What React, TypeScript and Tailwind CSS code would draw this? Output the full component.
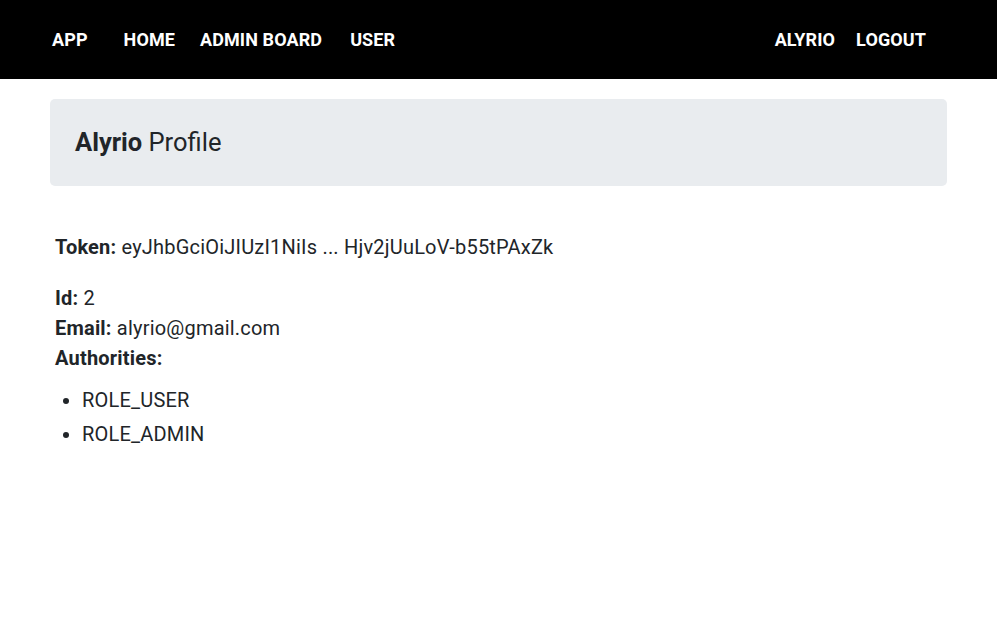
export default function App() {
  return (
    <div className="min-h-screen bg-white text-[#212529]" style={{ fontFamily: 'Roboto, "Liberation Sans", sans-serif' }}>
      <nav className="h-[79px] bg-black flex items-center text-white font-bold text-[18px] tracking-[0.1px] px-[52px]">
        <span>APP</span>
        <div className="flex ml-[36px]">
          <span>HOME</span>
          <span className="ml-[25px]">ADMIN BOARD</span>
          <span className="ml-[28px]">USER</span>
        </div>
        <div className="flex ml-auto mr-[19px]">
          <span>ALYRIO</span>
          <span className="ml-[21px]">LOGOUT</span>
        </div>
      </nav>
      <div className="px-[50px] pt-[20px]">
        <header className="bg-[#e9ecef] rounded-[5px] h-[87px] flex items-center px-[25px]">
          <h3 className="text-[25.5px]">
            <strong className="font-bold">Alyrio</strong> Profile
          </h3>
        </header>
        <div className="px-[5px] text-[20px] leading-[30px] tracking-[0.2px] mt-[46px]">
          <p>
            <strong className="font-bold">Token:</strong> eyJhbGciOiJIUzI1NiIs ... Hjv2jUuLoV-b55tPAxZk
          </p>
          <p className="mt-[21px]">
            <strong className="font-bold">Id:</strong> 2
          </p>
          <p>
            <strong className="font-bold">Email:</strong> alyrio@gmail.com
          </p>
          <strong className="font-bold block">Authorities:</strong>
          <ul className="list-disc pl-[27px] mt-[10px]">
            <li className="leading-[34px]">ROLE_USER</li>
            <li className="leading-[34px]">ROLE_ADMIN</li>
          </ul>
        </div>
      </div>
    </div>
  );
}
